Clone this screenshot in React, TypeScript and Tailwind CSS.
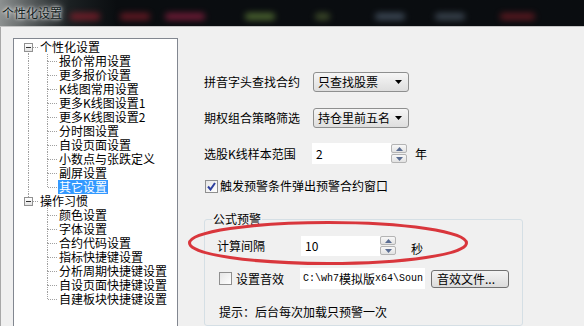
import React from "react";

const FONT = "font-['Noto_Sans_CJK_SC','Noto_Sans_CJK_JP',sans-serif]";
const DOT = "border-dotted border-[#a0a0a0]";

type Group = { label: string; children: string[] };

const TREE: Group[] = [
  {
    label: "个性化设置",
    children: [
      "报价常用设置",
      "更多报价设置",
      "K线图常用设置",
      "更多K线图设置1",
      "更多K线图设置2",
      "分时图设置",
      "自设页面设置",
      "小数点与张跌定义",
      "副屏设置",
      "其它设置",
    ],
  },
  {
    label: "操作习惯",
    children: [
      "颜色设置",
      "字体设置",
      "合约代码设置",
      "指标快捷键设置",
      "分析周期快捷键设置",
      "自设页面快捷键设置",
      "自建板块快捷键设置",
    ],
  },
];

const SELECTED = "其它设置";

function Cell({
  up,
  down,
  right,
  box,
}: {
  up?: boolean;
  down?: boolean;
  right?: boolean;
  box?: boolean;
}) {
  return (
    <div className="relative grid w-[19px] shrink-0 grid-cols-[10px_9px] grid-rows-[7px_7px]">
      <div className={up ? `border-r ${DOT}` : ""} />
      <div />
      <div className={down ? `border-r ${DOT}` : ""} />
      <div className={right ? `border-t ${DOT}` : ""} />
      {box ? (
        <div className="absolute left-[5px] top-[3px] flex h-[9px] w-[9px] items-center justify-center border border-[#919191] bg-gradient-to-b from-white to-[#e3e3e3]">
          <div className="h-px w-[5px] bg-[#333]" />
        </div>
      ) : null}
    </div>
  );
}

function TreeView() {
  return (
    <div className="h-[300px] w-[165px] overflow-hidden border border-[#828790] bg-white pl-[5px] pt-px">
      {TREE.map((g, gi) => {
        const hasNext = gi < TREE.length - 1;
        return (
          <div key={g.label}>
            <div className="flex h-[14px]">
              <Cell up={gi > 0} down={hasNext} right box />
              <span className="ml-px px-px text-[12px] leading-[14px] text-black">
                {g.label}
              </span>
            </div>
            {g.children.map((c, ci) => {
              const last = ci === g.children.length - 1;
              const sel = c === SELECTED;
              return (
                <div key={c} className="flex h-[14px]">
                  <Cell up={hasNext} down={hasNext} />
                  <Cell up down={!last} right />
                  <span
                    className={`ml-px px-[1px] text-[12px] leading-[14px] ${
                      sel ? "bg-[#3399ff] text-white" : "text-black"
                    }`}
                  >
                    {c}
                  </span>
                </div>
              );
            })}
          </div>
        );
      })}
    </div>
  );
}

function Combo({ value }: { value: string }) {
  return (
    <div className="flex h-[20px] w-[96px] items-center justify-between rounded-[3px] border border-[#8e8f8f] bg-gradient-to-b from-[#f6f6f6] to-[#dedede] pl-[4px] pr-[6px]">
      <span className="text-[12px] leading-[14px] text-black">{value}</span>
      <svg width="7" height="4" viewBox="0 0 7 4">
        <path d="M0 0h7L3.5 4z" fill="#000" />
      </svg>
    </div>
  );
}

function Spin() {
  return (
    <div className="flex w-[16px] flex-col gap-px py-px">
      {[0, 1].map((i) => (
        <div
          key={i}
          className="flex h-[9px] items-center justify-center rounded-[2px] border border-[#b4b4b4] bg-gradient-to-b from-[#f8f8f8] to-[#e2e2e2]"
        >
          <svg width="7" height="4" viewBox="0 0 7 4">
            <path d={i === 0 ? "M0 4h7L3.5 0z" : "M0 0h7L3.5 4z"} fill="#5a6d92" />
          </svg>
        </div>
      ))}
    </div>
  );
}

function Check({ checked }: { checked?: boolean }) {
  return (
    <div className="flex h-[13px] w-[13px] shrink-0 items-center justify-center border border-[#8f8f8f] bg-gradient-to-br from-[#e6e6e6] to-white">
      {checked ? (
        <svg width="9" height="9" viewBox="0 0 9 9">
          <path d="M1 4.5l2.5 3L8 1" fill="none" stroke="#2d3f9e" strokeWidth="2" />
        </svg>
      ) : null}
    </div>
  );
}

const BLOBS = [
  { w: "w-[30px]", ml: "ml-[8px]", c: "bg-[#8a1f2c]" },
  { w: "w-[30px]", ml: "ml-[20px]", c: "bg-[#7a1c28]" },
  { w: "w-[40px]", ml: "ml-[15px]", c: "bg-[#8a2040]" },
  { w: "w-[30px]", ml: "ml-[40px]", c: "bg-[#5c7a38]" },
  { w: "w-[15px]", ml: "ml-[40px]", c: "bg-[#4a5a30]" },
  { w: "w-[30px]", ml: "ml-[45px]", c: "bg-[#4a5868]" },
  { w: "w-[30px]", ml: "ml-[30px]", c: "bg-[#46525f]" },
  { w: "w-[35px]", ml: "ml-[35px]", c: "bg-[#6e1c24]" },
];

export default function App() {
  return (
    <div className={`relative h-[326px] w-[584px] overflow-hidden bg-[#f0f0f0] ${FONT}`}>
      <div className="flex h-[27px] items-center border-b border-[#c4c4c4] bg-gradient-to-r from-[#8c9090] from-0% via-[#1b2022] via-[12%] to-[#0a0d10] to-[20%]">
        <span className="ml-[2px] text-[12px] leading-[14px] text-[#112020] [text-shadow:0_0_6px_#ffffff,0_0_3px_#ffffff]">
          个性化设置
        </span>
        {BLOBS.map((b, i) => (
          <div
            key={i}
            className={`${b.w} ${b.ml} ${b.c} mt-[6px] h-[7px] rounded-full opacity-80 blur-[3px]`}
          />
        ))}
      </div>

      <div className="flex h-[299px] border-l border-[#a8a8a8]">
        <div className="pl-[12px] pt-[11px]">
          <TreeView />
        </div>

        <div className="ml-[26px] flex flex-col text-[12px] leading-[14px] text-black">
          <div className="mt-[45px] flex items-center">
            <span className="w-[109px]">拼音字头查找合约</span>
            <Combo value="只查找股票" />
          </div>
          <div className="mt-[16px] flex items-center">
            <span className="w-[109px]">期权组合策略筛选</span>
            <Combo value="持仓里前五名" />
          </div>
          <div className="mt-[15px] flex items-center">
            <span className="w-[108px]">选股K线样本范围</span>
            <div className="flex h-[21px] w-[79px] items-center bg-white pl-[4px]">2</div>
            <Spin />
            <span className="ml-[8px]">年</span>
          </div>
          <div className="mt-[15px] flex h-[14px] items-center">
            <div className="ml-px">
              <Check checked />
            </div>
            <span className="ml-[2px]">触发预警条件弹出预警合约窗口</span>
          </div>

          <fieldset className="mt-[19px] h-[140px] w-[319px] rounded-[3px] border border-[#d5dfe5]">
            <legend className="ml-[7px] px-px">公式预警</legend>
            <div className="mt-[9px] flex items-center pl-[12px]">
              <span className="w-[84px]">计算间隔</span>
              <div className="flex h-[20px] w-[79px] items-center bg-white pl-[4px]">10</div>
              <Spin />
              <span className="ml-[15px] pt-[6px]">秒</span>
            </div>
            <div className="mt-[12px] flex items-center pl-[14px]">
              <Check />
              <span className="ml-[4px]">设置音效</span>
              <div className="ml-[16px] flex h-[21px] w-[125px] items-center overflow-hidden whitespace-nowrap bg-white pl-[3px] font-['Liberation_Mono','Noto_Sans_CJK_SC',monospace] text-[10px]">
                C:\wh7<span className={`${FONT} text-[12px]`}>模拟版</span>x64\Soun
              </div>
              <div className="ml-[6px] flex h-[18px] w-[78px] items-center rounded-[3px] border border-[#707070] bg-gradient-to-b from-[#f4f4f4] to-[#dcdcdc] pl-[5px]">
                音效文件...
              </div>
            </div>
            <div className="mt-[16px] pl-[14px]">提示：后台每次加载只预警一次</div>
          </fieldset>
        </div>
      </div>

      <svg
        className="pointer-events-none absolute left-[187px] top-[220px]"
        width="282"
        height="46"
        viewBox="0 0 282 46"
      >
        <ellipse cx="141" cy="23" rx="138.5" ry="20.5" fill="none" stroke="#d9363c" strokeWidth="3" />
      </svg>
    </div>
  );
}
